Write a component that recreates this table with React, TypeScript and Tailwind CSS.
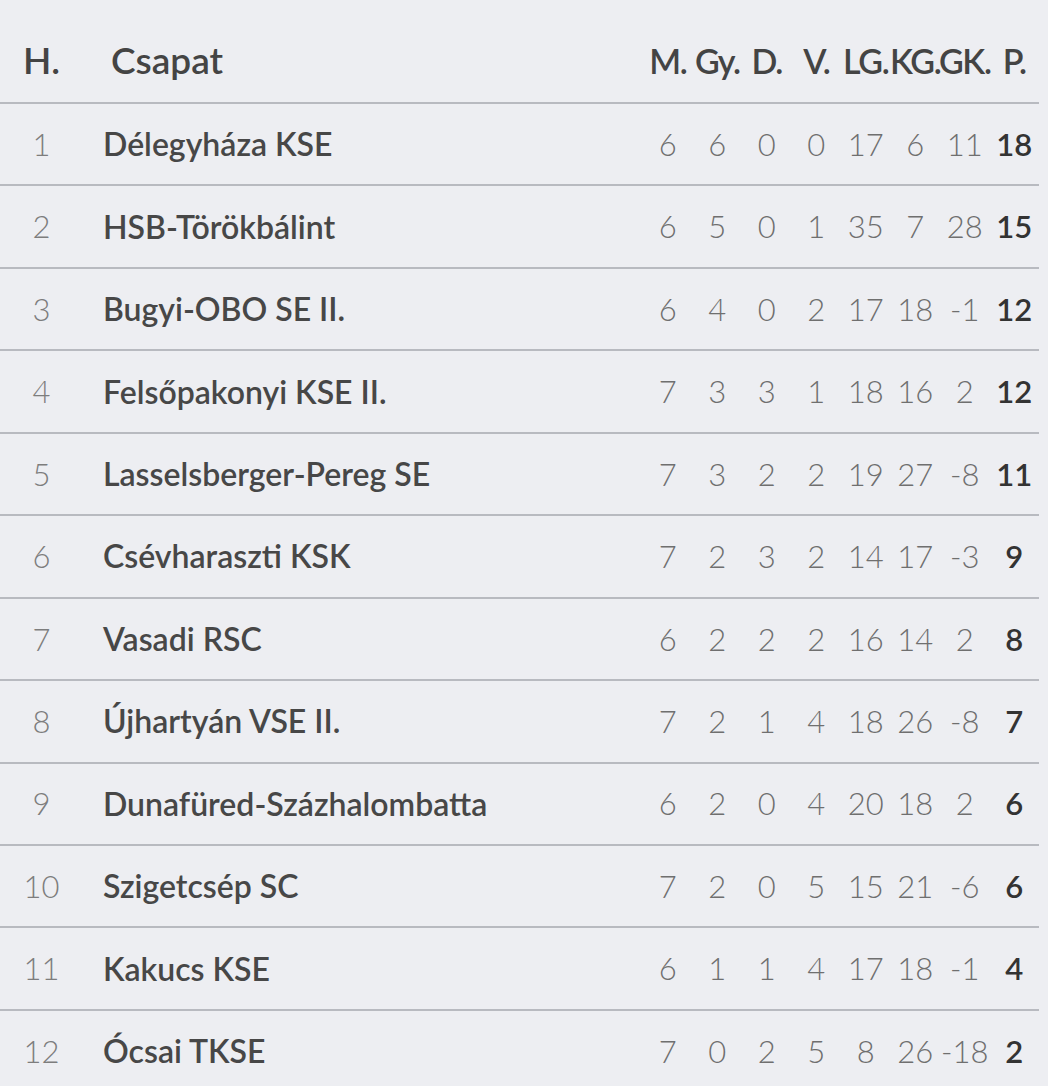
const rows: [number, string, number, number, number, number, number, number, number, number][] = [
  [1, "Délegyháza KSE", 6, 6, 0, 0, 17, 6, 11, 18],
  [2, "HSB-Törökbálint", 6, 5, 0, 1, 35, 7, 28, 15],
  [3, "Bugyi-OBO SE II.", 6, 4, 0, 2, 17, 18, -1, 12],
  [4, "Felsőpakonyi KSE II.", 7, 3, 3, 1, 18, 16, 2, 12],
  [5, "Lasselsberger-Pereg SE", 7, 3, 2, 2, 19, 27, -8, 11],
  [6, "Csévharaszti KSK", 7, 2, 3, 2, 14, 17, -3, 9],
  [7, "Vasadi RSC", 6, 2, 2, 2, 16, 14, 2, 8],
  [8, "Újhartyán VSE II.", 7, 2, 1, 4, 18, 26, -8, 7],
  [9, "Dunafüred-Százhalombatta", 6, 2, 0, 4, 20, 18, 2, 6],
  [10, "Szigetcsép SC", 7, 2, 0, 5, 15, 21, -6, 6],
  [11, "Kakucs KSE", 6, 1, 1, 4, 17, 18, -1, 4],
  [12, "Ócsai TKSE", 7, 0, 2, 5, 8, 26, -18, 2],
];

const heads = ["M.", "Gy.", "D.", "V.", "LG.", "KG.", "GK.", "P."];

const grid = "grid grid-cols-[83px_560px_repeat(8,49.5px)] items-center";

export default function App() {
  return (
    <div className="min-h-screen bg-[#edeef2] font-['Lato',sans-serif]">
      <div className="w-[1039px]">
        <div className={`${grid} h-[104px] pt-[18px] border-b-2 border-[#b8bac0] text-[37px] font-semibold text-[#444]`}>
          <div className="text-center">H.</div>
          <div className="pl-7">Csapat</div>
          {heads.map((h) => (
            <div key={h} className="text-center whitespace-nowrap -mx-2 text-[34px] tracking-[-0.04em]">{h}</div>
          ))}
        </div>
        {rows.map((r) => (
          <div key={r[0]} className={`${grid} h-[82.45px] border-b-2 border-[#b8bac0] text-[31px]`}>
            <div className="text-center font-light text-[#7d7d7d]">{r[0]}</div>
            <div className="pl-5 text-[32px] font-semibold text-[#474747] whitespace-nowrap">{r[1]}</div>
            {r.slice(2, 9).map((v, i) => (
              <div key={i} className="text-center font-light text-[#6f6f6f] whitespace-nowrap">{v}</div>
            ))}
            <div className="text-center font-semibold text-[#333]">{r[9]}</div>
          </div>
        ))}
      </div>
    </div>
  );
}
